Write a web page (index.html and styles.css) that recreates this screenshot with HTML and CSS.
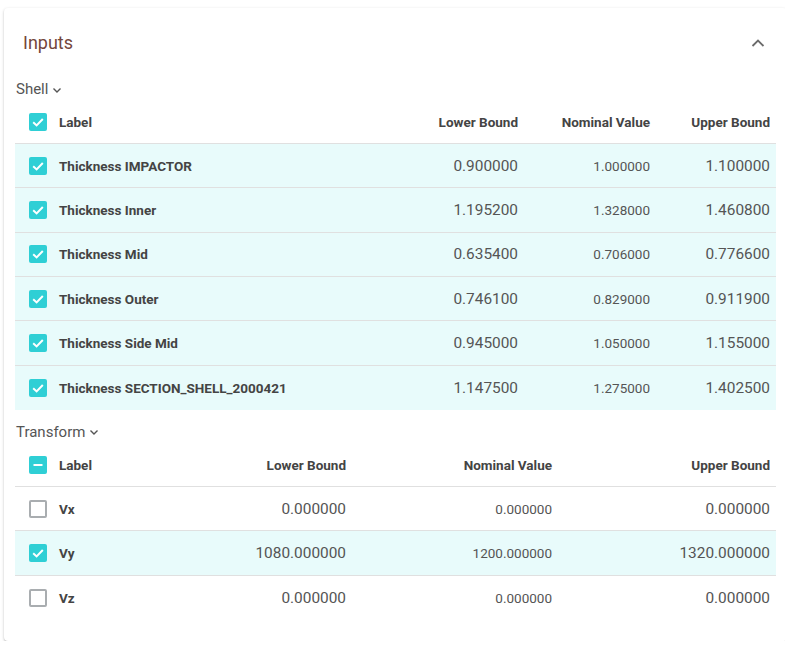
FILE: index.html
```html
<!DOCTYPE html>
<html>
<head>
<meta charset="utf-8">
<link rel="stylesheet" href="styles.css">
</head>
<body>
<div class="card">
  <div class="card-head">
    <span class="title">Inputs</span>
    <svg class="collapse" width="14" height="10" viewBox="0 0 14 10"><path d="M1.5 8 L7 2.5 L12.5 8" fill="none" stroke="#6b6b6b" stroke-width="1.8"/></svg>
  </div>

  <div class="group">Shell <svg class="caret" width="10" height="8" viewBox="0 0 10 8"><path d="M1.5 2.5 L5 6 L8.5 2.5" fill="none" stroke="#555" stroke-width="1.4"/></svg></div>
  <div class="tbl shell">
    <div class="row head">
      <span class="cb on"><svg viewBox="0 0 18 18"><path d="M4.2 9.2 L7.6 12.4 L13.8 6" fill="none" stroke="#fff" stroke-width="2"/></svg></span>
      <span class="lbl">Label</span><span class="num">Lower Bound</span><span class="num">Nominal Value</span><span class="num">Upper Bound</span>
    </div>
    <div class="row sel">
      <span class="cb on"><svg viewBox="0 0 18 18"><path d="M4.2 9.2 L7.6 12.4 L13.8 6" fill="none" stroke="#fff" stroke-width="2"/></svg></span>
      <span class="lbl">Thickness IMPACTOR</span><span class="num v">0.900000</span><span class="num n">1.000000</span><span class="num v">1.100000</span>
    </div>
    <div class="row sel">
      <span class="cb on"><svg viewBox="0 0 18 18"><path d="M4.2 9.2 L7.6 12.4 L13.8 6" fill="none" stroke="#fff" stroke-width="2"/></svg></span>
      <span class="lbl">Thickness Inner</span><span class="num v">1.195200</span><span class="num n">1.328000</span><span class="num v">1.460800</span>
    </div>
    <div class="row sel">
      <span class="cb on"><svg viewBox="0 0 18 18"><path d="M4.2 9.2 L7.6 12.4 L13.8 6" fill="none" stroke="#fff" stroke-width="2"/></svg></span>
      <span class="lbl">Thickness Mid</span><span class="num v">0.635400</span><span class="num n">0.706000</span><span class="num v">0.776600</span>
    </div>
    <div class="row sel">
      <span class="cb on"><svg viewBox="0 0 18 18"><path d="M4.2 9.2 L7.6 12.4 L13.8 6" fill="none" stroke="#fff" stroke-width="2"/></svg></span>
      <span class="lbl">Thickness Outer</span><span class="num v">0.746100</span><span class="num n">0.829000</span><span class="num v">0.911900</span>
    </div>
    <div class="row sel">
      <span class="cb on"><svg viewBox="0 0 18 18"><path d="M4.2 9.2 L7.6 12.4 L13.8 6" fill="none" stroke="#fff" stroke-width="2"/></svg></span>
      <span class="lbl">Thickness Side Mid</span><span class="num v">0.945000</span><span class="num n">1.050000</span><span class="num v">1.155000</span>
    </div>
    <div class="row sel last">
      <span class="cb on"><svg viewBox="0 0 18 18"><path d="M4.2 9.2 L7.6 12.4 L13.8 6" fill="none" stroke="#fff" stroke-width="2"/></svg></span>
      <span class="lbl">Thickness SECTION_SHELL_2000421</span><span class="num v">1.147500</span><span class="num n">1.275000</span><span class="num v">1.402500</span>
    </div>
  </div>

  <div class="group second">Transform <svg class="caret" width="10" height="8" viewBox="0 0 10 8"><path d="M1.5 2.5 L5 6 L8.5 2.5" fill="none" stroke="#555" stroke-width="1.4"/></svg></div>
  <div class="tbl transform">
    <div class="row head">
      <span class="cb on"><svg viewBox="0 0 18 18"><path d="M4.5 9 L13.5 9" fill="none" stroke="#fff" stroke-width="2"/></svg></span>
      <span class="lbl">Label</span><span class="num">Lower Bound</span><span class="num">Nominal Value</span><span class="num">Upper Bound</span>
    </div>
    <div class="row">
      <span class="cb"></span>
      <span class="lbl">Vx</span><span class="num v">0.000000</span><span class="num n">0.000000</span><span class="num v">0.000000</span>
    </div>
    <div class="row sel">
      <span class="cb on"><svg viewBox="0 0 18 18"><path d="M4.2 9.2 L7.6 12.4 L13.8 6" fill="none" stroke="#fff" stroke-width="2"/></svg></span>
      <span class="lbl">Vy</span><span class="num v">1080.000000</span><span class="num n">1200.000000</span><span class="num v">1320.000000</span>
    </div>
    <div class="row">
      <span class="cb"></span>
      <span class="lbl">Vz</span><span class="num v">0.000000</span><span class="num n">0.000000</span><span class="num v">0.000000</span>
    </div>
  </div>
</div>
</body>
</html>
```

FILE: styles.css
```css
html, body {
  margin: 0;
  padding: 0;
  background: #fff;
  overflow: hidden;
}
body {
  font-family: Roboto, "Liberation Sans", sans-serif;
  color: #444;
}
.card {
  margin: 8px 0 0 4px;
  width: 783px;
  box-sizing: border-box;
  padding: 0 11px 21px;
  background: #fff;
  border-radius: 4px;
  box-shadow: 0 1px 3px rgba(0,0,0,0.22), 0 1px 1px rgba(0,0,0,0.10);
}
.card-head {
  height: 69px;
  display: flex;
  align-items: center;
  justify-content: space-between;
  padding: 0 11px 0 8px;
}
.title {
  font-size: 18px;
  color: #74463b;
  font-weight: 400;
}
.collapse { display: block; }
.group {
  height: 24px;
  display: flex;
  align-items: center;
  gap: 4px;
  font-size: 15px;
  color: #555;
  padding-left: 1px;
}
.group.second { margin-top: 10px; }
.caret { display: block; margin-top: 1px; }
.row {
  display: grid;
  align-items: center;
  height: 44.33px;
  box-sizing: border-box;
  border-bottom: 1px solid #e0e0e0;
}
.shell .row { grid-template-columns: 44px 1fr 130px 132px 120px; }
.transform .row { grid-template-columns: 44px 93px 200px 206px 218px; }
.row.last, .transform .row:last-child { border-bottom: none; }
.row.sel { background: #e8fbfb; }
.row.head { height: 43px; }
.cb {
  width: 18px;
  height: 18px;
  box-sizing: border-box;
  margin-left: 14px;
  border: 2px solid #a9adb0;
  border-radius: 2px;
  display: block;
}
.cb.on {
  border: none;
  background: #2fcfd5;
}
.cb svg { display: block; width: 18px; height: 18px; }
.lbl {
  font-size: 13.5px;
  font-weight: 700;
  color: #444;
  white-space: nowrap;
}
.num {
  text-align: right;
  padding-right: 6px;
  font-size: 13.5px;
  font-weight: 700;
  color: #444;
  white-space: nowrap;
}
.num.v { font-size: 15.4px; font-weight: 400; color: #555; }
.num.n { font-size: 13.5px; font-weight: 400; color: #555; }
```
